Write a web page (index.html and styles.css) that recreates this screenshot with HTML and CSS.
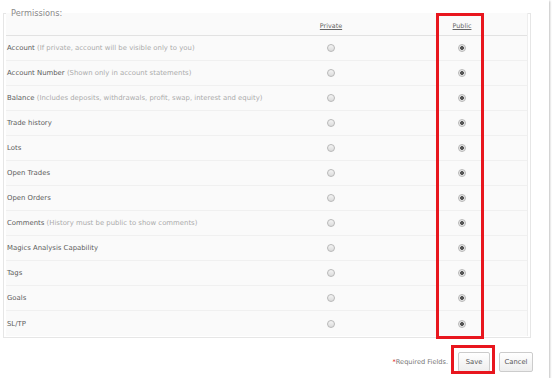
FILE: index.html
```html
<!DOCTYPE html>
<html lang="en">
<head>
    <meta charset="UTF-8">
    <title>Permissions</title>
    <link rel="stylesheet" href="styles.css">
</head>
<body>

<div class="page">
    <fieldset class="perm-box">
        <legend class="perm-legend">Permissions:</legend>

        <div class="perm-table">
            <div class="perm-row perm-head">
                <div class="perm-label"></div>
                <div class="perm-col"><span class="col-title">Private</span></div>
                <div class="perm-col"><span class="col-title">Public</span></div>
            </div>

            <div class="perm-row">
                <div class="perm-label"><b>Account</b> <span class="hint">(If private, account will be visible only to you)</span></div>
                <div class="perm-col"><span class="radio"></span></div>
                <div class="perm-col"><span class="radio checked"></span></div>
            </div>
            <div class="perm-row">
                <div class="perm-label"><b>Account Number</b> <span class="hint">(Shown only in account statements)</span></div>
                <div class="perm-col"><span class="radio"></span></div>
                <div class="perm-col"><span class="radio checked"></span></div>
            </div>
            <div class="perm-row">
                <div class="perm-label"><b>Balance</b> <span class="hint">(Includes deposits, withdrawals, profit, swap, interest and equity)</span></div>
                <div class="perm-col"><span class="radio"></span></div>
                <div class="perm-col"><span class="radio checked"></span></div>
            </div>
            <div class="perm-row">
                <div class="perm-label"><b>Trade history</b></div>
                <div class="perm-col"><span class="radio"></span></div>
                <div class="perm-col"><span class="radio checked"></span></div>
            </div>
            <div class="perm-row">
                <div class="perm-label"><b>Lots</b></div>
                <div class="perm-col"><span class="radio"></span></div>
                <div class="perm-col"><span class="radio checked"></span></div>
            </div>
            <div class="perm-row">
                <div class="perm-label"><b>Open Trades</b></div>
                <div class="perm-col"><span class="radio"></span></div>
                <div class="perm-col"><span class="radio checked"></span></div>
            </div>
            <div class="perm-row">
                <div class="perm-label"><b>Open Orders</b></div>
                <div class="perm-col"><span class="radio"></span></div>
                <div class="perm-col"><span class="radio checked"></span></div>
            </div>
            <div class="perm-row">
                <div class="perm-label"><b>Comments</b> <span class="hint">(History must be public to show comments)</span></div>
                <div class="perm-col"><span class="radio"></span></div>
                <div class="perm-col"><span class="radio checked"></span></div>
            </div>
            <div class="perm-row">
                <div class="perm-label"><b>Magics Analysis Capability</b></div>
                <div class="perm-col"><span class="radio"></span></div>
                <div class="perm-col"><span class="radio checked"></span></div>
            </div>
            <div class="perm-row">
                <div class="perm-label"><b>Tags</b></div>
                <div class="perm-col"><span class="radio"></span></div>
                <div class="perm-col"><span class="radio checked"></span></div>
            </div>
            <div class="perm-row">
                <div class="perm-label"><b>Goals</b></div>
                <div class="perm-col"><span class="radio"></span></div>
                <div class="perm-col"><span class="radio checked"></span></div>
            </div>
            <div class="perm-row last">
                <div class="perm-label"><b>SL/TP</b></div>
                <div class="perm-col"><span class="radio"></span></div>
                <div class="perm-col"><span class="radio checked"></span></div>
            </div>
        </div>
    </fieldset>

    <div class="form-footer">
        <span class="required"><span class="star">*</span>Required Fields.</span>
        <button class="btn">Save</button>
        <button class="btn btn-cancel">Cancel</button>
    </div>

    <!-- annotation boxes -->
    <div class="mark mark-public"></div>
    <div class="mark mark-save"></div>
</div>

</body>
</html>
```

FILE: styles.css
```css
* {
    box-sizing: border-box;
    margin: 0;
    padding: 0;
}

body {
    font-family: "DejaVu Sans", Verdana, sans-serif;
    background-color: #ffffff;
    color: #555555;
}

.page {
    position: relative;
    width: 549px;
    height: 378px;
    background-color: #ffffff;
    box-shadow: 1px 1px 2px rgba(0, 0, 0, 0.25);
    padding-top: 8px;
}

.perm-box {
    margin: 0 18px 0 3px;
    border: 1px solid #e6e6e6;
    padding: 0 2px 1px 2px;
}

.perm-legend {
    margin-left: 2px;
    padding: 0 3px;
    font-size: 8.2px;
    line-height: 10px;
    color: #8a8a8a;
}

.perm-table {
    background-color: #fafafa;
    border-right: 1px solid #eeeeee;
    margin-top: -5px;
}

.perm-row {
    display: grid;
    grid-template-columns: 259px 132px 130px;
    align-items: center;
    height: 25px;
    border-bottom: 1px solid #f0f0f0;
}

.perm-row.last {
    border-bottom: none;
}

.perm-head {
    height: 23px;
    align-items: end;
    padding-bottom: 5px;
    border-bottom: 1px solid #e2e2e2;
}

.perm-label {
    padding-left: 1px;
    font-size: 6.9px;
    white-space: nowrap;
}

.perm-label b {
    font-weight: normal;
    color: #5c5c5c;
}

.hint {
    color: #ababab;
}

.perm-col {
    display: flex;
    justify-content: center;
}

.col-title {
    font-size: 6.4px;
    color: #666666;
    text-decoration: underline;
}

.radio {
    display: block;
    width: 8px;
    height: 8px;
    border-radius: 50%;
    border: 1px solid #b8b8b8;
    background: linear-gradient(#f4f4f4, #dcdcdc);
}

.radio.checked {
    background: radial-gradient(circle, #555555 0, #555555 1.6px, #e6e6e6 2.2px);
}

.form-footer {
    display: flex;
    justify-content: flex-end;
    align-items: center;
    gap: 9px;
    padding-right: 16px;
    margin-top: 14px;
}

.required {
    font-size: 6.6px;
    color: #777777;
    margin-right: 1px;
}

.star {
    color: #e02020;
}

.btn {
    height: 20px;
    width: 32px;
    border: 1px solid #cccccc;
    border-radius: 2px;
    background: linear-gradient(#ffffff, #eeeeee);
    font-family: inherit;
    font-size: 6.8px;
    color: #555555;
}

.btn-cancel {
    width: 34px;
}

.mark {
    position: absolute;
    border: 3px solid #e8161e;
}

.mark-public {
    left: 436px;
    top: 13px;
    width: 48px;
    height: 326px;
}

.mark-save {
    left: 451px;
    top: 345px;
    width: 44px;
    height: 29px;
}
```
